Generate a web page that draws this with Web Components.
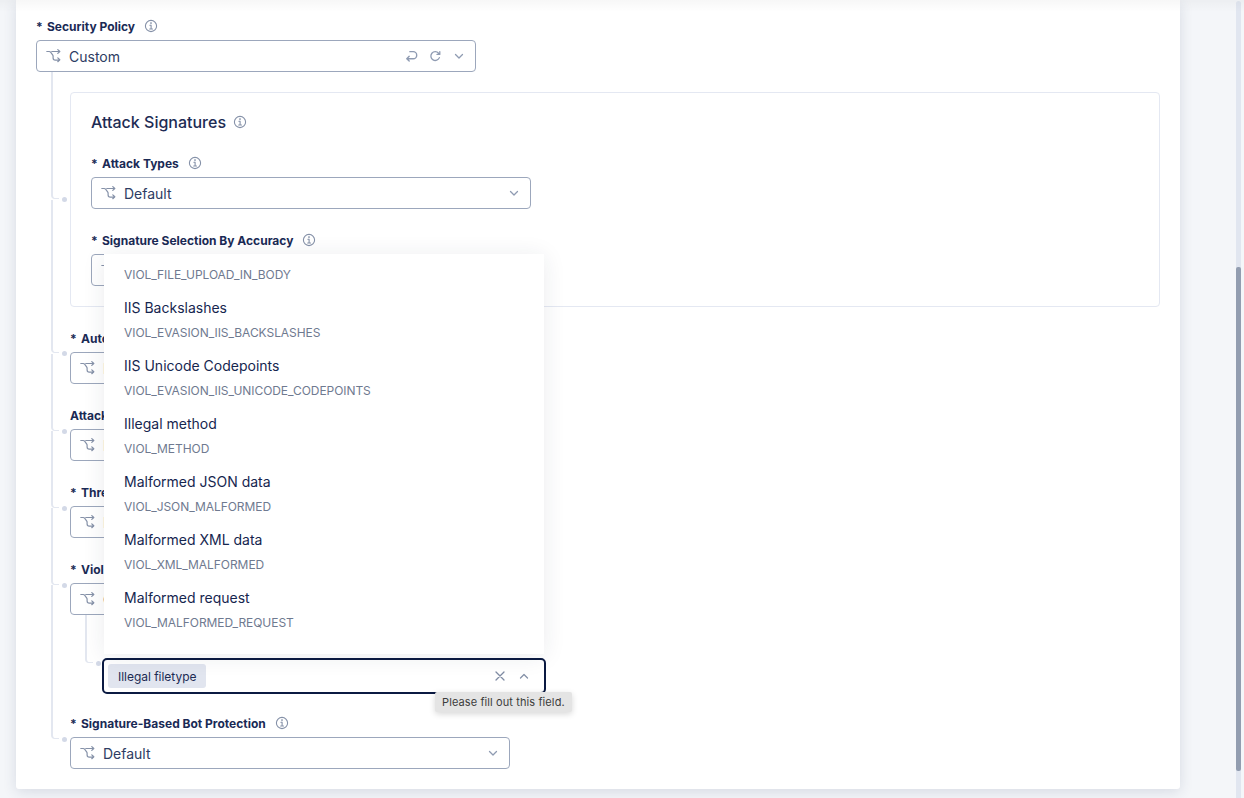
<!DOCTYPE html>
<html>
<head>
<meta charset="utf-8">
<title>Security Policy</title>
<style>
    html, body { margin: 0; height: 798px; overflow: hidden; }
    body { font-family: Inter, "Liberation Sans", sans-serif; color: #16264f; background: #f4f6f9; }
</style>
</head>
<body>
<policy-page>
    <form-card>
        <form-field label="Security Policy" required info>
            <policy-select value="Custom" actions></policy-select>
        </form-field>
        <tree-group style="--gap-top: 20px">
            <tree-branch style="--from: 20px; --y: 107px">
                <form-section title="Attack Signatures">
                    <form-field label="Attack Types" required info>
                        <policy-select value="Default"></policy-select>
                    </form-field>
                    <form-field label="Signature Selection By Accuracy" required info>
                        <policy-select value=""></policy-select>
                    </form-field>
                </form-section>
            </tree-branch>
            <tree-branch style="--from: 130px; --y: 23px">
                <form-field label="Auto" required>
                    <policy-select value="D" short></policy-select>
                </form-field>
            </tree-branch>
            <tree-branch style="--from: 53px; --y: 24px">
                <form-field label="Attack">
                    <policy-select value="D" short></policy-select>
                </form-field>
            </tree-branch>
            <tree-branch style="--from: 53px; --y: 24px">
                <form-field label="Thre" required>
                    <policy-select value="D" short></policy-select>
                </form-field>
            </tree-branch>
            <tree-branch style="--from: 53px; --y: 24px">
                <form-field label="Viol" required>
                    <policy-select value="C" short></policy-select>
                </form-field>
                <tree-group style="--gap-top: 43px">
                    <tree-branch nested style="--from: 43px; --y: 5px">
                        <multi-select>
                            <filter-chip slot="chips">Illegal filetype</filter-chip>
                            <option-list slot="menu">
                                <list-option code="VIOL_FILE_UPLOAD_IN_BODY" cut></list-option>
                                <list-option name="IIS Backslashes" code="VIOL_EVASION_IIS_BACKSLASHES"></list-option>
                                <list-option name="IIS Unicode Codepoints" code="VIOL_EVASION_IIS_UNICODE_CODEPOINTS"></list-option>
                                <list-option name="Illegal method" code="VIOL_METHOD"></list-option>
                                <list-option name="Malformed JSON data" code="VIOL_JSON_MALFORMED"></list-option>
                                <list-option name="Malformed XML data" code="VIOL_XML_MALFORMED"></list-option>
                                <list-option name="Malformed request" code="VIOL_MALFORMED_REQUEST"></list-option>
                            </option-list>
                            <fill-tooltip slot="tip">Please fill out this field.</fill-tooltip>
                        </multi-select>
                    </tree-branch>
                </tree-group>
            </tree-branch>
            <tree-branch style="--from: 130px; --y: 24px; margin-top: -2px">
                <form-field label="Signature-Based Bot Protection" required info>
                    <policy-select value="Default" short></policy-select>
                </form-field>
            </tree-branch>
        </tree-group>
    </form-card>
</policy-page>

<script>
(function () {

    const ICONS = {
        route: '<path d="M.8 2.5h2.4c.6 0 1 .2 1.4.7l2 2.6c.3.4.5.8.5 1.4v1.8c0 1.3.8 2.2 2.2 2.2h4.2M5.8 2.5h8M11.8.6l2 1.9-2 1.9M11.8 8.9l2 1.9-2 1.9"/>',
        info: '<circle cx="7" cy="7" r="5.6"/><path d="M5.9 6.2H7.1V10M5.7 10h2.8"/><path d="M7 3.7v.9" stroke-width="1.4"/>',
        undo: '<path d="M3.5 10h6a3.3 3.3 0 0 0 0-6.6H6.4M5.8 7.8L3.5 10l2.3 2.2"/>',
        redo: '<path d="M11.4 8.6A4.4 4.4 0 1 1 10.6 4.2L11.8 5.4M11.8 2.6v2.8H9"/>',
        down: '<path d="M3.5 5.5L7 9l3.5-3.5"/>',
        up: '<path d="M3.5 9L7 5.5 10.5 9"/>',
        close: '<path d="M3 3l8 8M11 3l-8 8"/>'
    };

    function icon(name, size, color, width) {
        const box = name === 'route' ? 15 : 14;
        return `<svg width="${size}" height="${size}" viewBox="0 0 ${box} ${box}" fill="none" stroke="${color}" stroke-width="${width || 1.1}" stroke-linecap="round" stroke-linejoin="round">${ICONS[name]}</svg>`;
    }

    class PolicyPage extends HTMLElement {
        constructor() {
            super();
            this.attachShadow({ mode: 'open' }).innerHTML = `
                <style>
                    :host { display: flex; height: 798px; padding-left: 16px; box-sizing: border-box; position: relative; }
                    .shade { position: absolute; left: 0; right: 0; top: 0; height: 12px; background: linear-gradient(#00000008, #00000000); z-index: 3; pointer-events: none; }
                    .bar { width: 5px; height: 797px; margin: 1px 3px 0 auto; background: #e1e6f0; border-radius: 3px 3px 0 0; display: flex; flex-direction: column; }
                    .thumb { margin-top: 266px; height: 504px; background: #929db0; border-radius: 2px; }
                </style>
                <div class="shade"></div>
                <slot></slot>
                <div class="bar"><div class="thumb"></div></div>
            `;
        }
    }

    class FormCard extends HTMLElement {
        constructor() {
            super();
            this.attachShadow({ mode: 'open' }).innerHTML = `
                <style>
                    :host { display: block; width: 1164px; height: 789px; box-sizing: border-box; padding: 18px 20px 0; background: #fff; border-radius: 0 0 3px 3px; box-shadow: 0 3px 14px rgba(40, 60, 100, .14); }
                </style>
                <slot></slot>
            `;
        }
    }

    class FormField extends HTMLElement {
        constructor() {
            super();
            const star = this.hasAttribute('required') ? '<span class="star">*</span>' : '';
            const info = this.hasAttribute('info') ? `<span class="info">${icon('info', 14, '#8591a8')}</span>` : '';
            this.attachShadow({ mode: 'open' }).innerHTML = `
                <style>
                    :host { display: block; }
                    .label { display: flex; align-items: center; height: 15px; padding-top: 1px; margin-bottom: 6px; font-size: 12px; font-weight: 700; line-height: 16px; color: #1a2a55; white-space: nowrap; }
                    .star { width: 11px; }
                    .info { display: flex; margin: -1px 0 0 9px; }
                </style>
                <div class="label">${star}<span>${this.getAttribute('label')}</span>${info}</div>
                <slot></slot>
            `;
        }
    }

    class PolicySelect extends HTMLElement {
        constructor() {
            super();
            const actions = this.hasAttribute('actions')
                ? `<span class="act">${icon('undo', 15, '#8f9bb2', 1.3)}</span><span class="act">${icon('redo', 14, '#8f9bb2', 1.3)}</span>`
                : '';
            this.attachShadow({ mode: 'open' }).innerHTML = `
                <style>
                    :host { display: flex; align-items: center; width: 440px; height: 32px; box-sizing: border-box; padding: 0 9px 0 9px; border: 1px solid #9ca7bc; border-radius: 4px; background: #fff; font-size: 14px; color: #2d3c63; }
                    .route { display: flex; margin-right: 8px; }
                    .value { flex: 1; }
                    .act { display: flex; margin: -1px 10px 0 0; }
                    .chev { display: flex; margin-top: -1px; }
                </style>
                <span class="route">${icon('route', 15, '#8591a8', 1.2)}</span>
                <span class="value">${this.getAttribute('value')}</span>
                ${actions}
                <span class="chev">${icon('down', 14, '#8f9bb2', 1.3)}</span>
            `;
        }
    }

    class TreeGroup extends HTMLElement {
        constructor() {
            super();
            this.attachShadow({ mode: 'open' }).innerHTML = `
                <style>
                    :host { display: flex; flex-direction: column; gap: 23px; margin-top: var(--gap-top, 0); }
                </style>
                <slot></slot>
            `;
        }
    }

    class TreeBranch extends HTMLElement {
        constructor() {
            super();
            this.attachShadow({ mode: 'open' }).innerHTML = `
                <style>
                    :host { display: block; position: relative; padding-left: 34px; }
                    :host([nested]) { padding-left: 32px; }
                    .line { position: absolute; left: 15px; top: calc(var(--from) * -1); height: calc(var(--from) + var(--y)); width: 8px; box-sizing: border-box; border-left: 2px solid #e3e7f0; border-bottom: 1px solid #e3e7f0; border-bottom-left-radius: 4px; }
                    .dot { position: absolute; left: 26px; top: calc(var(--y) - 2px); width: 5px; height: 5px; border-radius: 50%; background: #d3d9e7; }
                </style>
                <span class="line"></span><span class="dot"></span>
                <slot></slot>
            `;
        }
    }

    class FormSection extends HTMLElement {
        constructor() {
            super();
            this.attachShadow({ mode: 'open' }).innerHTML = `
                <style>
                    :host { display: flex; flex-direction: column; gap: 23px; padding: 17px 20px 20px; border: 1px solid #e4e8f2; border-radius: 4px; background: #fff; }
                    .title { display: flex; align-items: center; height: 24px; margin-bottom: -2px; font-size: 16px; font-weight: 500; color: #1d2c54; }
                    .info { display: flex; margin-left: 7px; }
                </style>
                <div class="title">${this.getAttribute('title')}<span class="info">${icon('info', 14, '#8591a8')}</span></div>
                <slot></slot>
            `;
            this.removeAttribute('title');
        }
    }

    class MultiSelect extends HTMLElement {
        constructor() {
            super();
            this.attachShadow({ mode: 'open' }).innerHTML = `
                <style>
                    :host { display: flex; align-items: center; position: relative; width: 444px; height: 36px; box-sizing: border-box; padding: 0 13px 0 4px; border: 2px solid #0b1a42; border-radius: 5px; background: #fff; }
                    .chips { flex: 1; display: flex; }
                    .clear { display: flex; margin-right: 10px; }
                    .chev { display: flex; }
                </style>
                <span class="chips"><slot name="chips"></slot></span>
                <span class="clear">${icon('close', 14, '#7f8ba3', 1.3)}</span>
                <span class="chev">${icon('up', 14, '#8591a8', 1.3)}</span>
                <slot name="menu"></slot>
                <slot name="tip"></slot>
            `;
        }
    }

    class FilterChip extends HTMLElement {
        constructor() {
            super();
            this.attachShadow({ mode: 'open' }).innerHTML = `
                <style>
                    :host { display: flex; align-items: center; height: 24px; padding: 0 10px; border-radius: 3px; background: #e1e5ef; font-size: 12px; letter-spacing: -.03px; color: #1d2c54; }
                </style>
                <slot></slot>
            `;
        }
    }

    class OptionList extends HTMLElement {
        constructor() {
            super();
            this.attachShadow({ mode: 'open' }).innerHTML = `
                <style>
                    :host { position: absolute; left: 0; bottom: calc(100% + 6px); width: 440px; height: 400px; box-sizing: border-box; display: flex; flex-direction: column; overflow: hidden; background: #fff; box-shadow: 0 2px 22px rgba(30, 40, 70, .09); z-index: 2; }
                </style>
                <slot></slot>
            `;
        }
    }

    class ListOption extends HTMLElement {
        constructor() {
            super();
            const name = this.getAttribute('name');
            this.attachShadow({ mode: 'open' }).innerHTML = `
                <style>
                    :host { display: flex; flex-direction: column; flex: none; height: 58px; box-sizing: border-box; padding: 9px 20px 0; }
                    :host([cut]) { height: 35px; padding-top: 13px; }
                    .name { height: 20px; font-size: 14px; line-height: 20px; color: #16264f; }
                    .code { margin-top: 7px; height: 16px; font-size: 12px; line-height: 16px; letter-spacing: -.06px; color: #6f7a90; }
                    :host([cut]) .code { margin-top: 0; }
                </style>
                ${name ? `<div class="name">${name}</div>` : ''}
                <div class="code">${this.getAttribute('code')}</div>
            `;
        }
    }

    class FillTooltip extends HTMLElement {
        constructor() {
            super();
            this.attachShadow({ mode: 'open' }).innerHTML = `
                <style>
                    :host { position: absolute; left: 331px; top: 32px; height: 20px; box-sizing: border-box; display: flex; align-items: center; padding: 0 7px; background: #e4e4e4; border-radius: 2px; box-shadow: 0 2px 6px rgba(0, 0, 0, .16); font-size: 11px; letter-spacing: .1px; color: #3c3c3c; white-space: nowrap; z-index: 4; }
                </style>
                <slot></slot>
            `;
        }
    }

    window.customElements.define('policy-page', PolicyPage);
    window.customElements.define('form-card', FormCard);
    window.customElements.define('form-field', FormField);
    window.customElements.define('policy-select', PolicySelect);
    window.customElements.define('tree-group', TreeGroup);
    window.customElements.define('tree-branch', TreeBranch);
    window.customElements.define('form-section', FormSection);
    window.customElements.define('multi-select', MultiSelect);
    window.customElements.define('filter-chip', FilterChip);
    window.customElements.define('option-list', OptionList);
    window.customElements.define('list-option', ListOption);
    window.customElements.define('fill-tooltip', FillTooltip);

})();
</script>
</body>
</html>
